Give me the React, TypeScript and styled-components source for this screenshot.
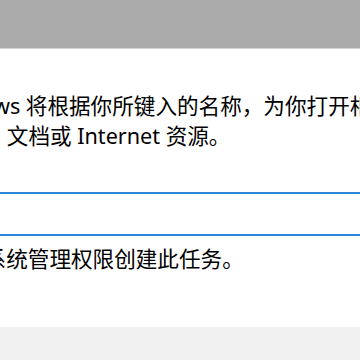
import React from "react";
import styled, { createGlobalStyle } from "styled-components";

const Global = createGlobalStyle`
  html, body { margin: 0; padding: 0; background: #ffffff; }
  body { width: 360px; height: 360px; overflow: hidden; }
  #root { width: 360px; height: 360px; }
`;

const Dialog = styled.div`
  width: 360px;
  height: 360px;
  display: flex;
  flex-direction: column;
  overflow: hidden;
  background: #ffffff;
  font-family: "Noto Sans", "Noto Sans CJK SC", sans-serif;
  color: #000000;
`;

const TitleBar = styled.div`
  flex: 0 0 48px;
  background: #aaaaaa;
  border-bottom: 1px solid #d2d2d2;
`;

const Body = styled.div`
  flex: 1 1 auto;
  display: flex;
  flex-direction: column;
  padding-top: 42px;
`;

const Description = styled.div`
  display: flex;
  flex-direction: column;
`;

const Line = styled.div<{ $indent: number }>`
  margin-left: ${(p) => p.$indent}px;
  font-size: 21.6px;
  line-height: 30px;
  white-space: nowrap;
`;

const Input = styled.div`
  margin: 41px -20px 0 -20px;
  height: 40px;
  border: 2px solid #2a86d8;
  background: #ffffff;
`;

const CheckLabel = styled(Line)`
  margin-top: 8px;
`;

const Footer = styled.div`
  flex: 0 0 33px;
  background: #f0f0f0;
`;

export default function App() {
  return (
    <>
      <Global />
      <Dialog>
        <TitleBar />
        <Body>
          <Description>
            <Line $indent={-72}>Windows 将根据你所键入的名称，为你打开相应的程序、</Line>
            <Line $indent={-58}>件夹、文档或 Internet 资源。</Line>
          </Description>
          <Input />
          <CheckLabel $indent={-37}>以系统管理权限创建此任务。</CheckLabel>
        </Body>
        <Footer />
      </Dialog>
    </>
  );
}
